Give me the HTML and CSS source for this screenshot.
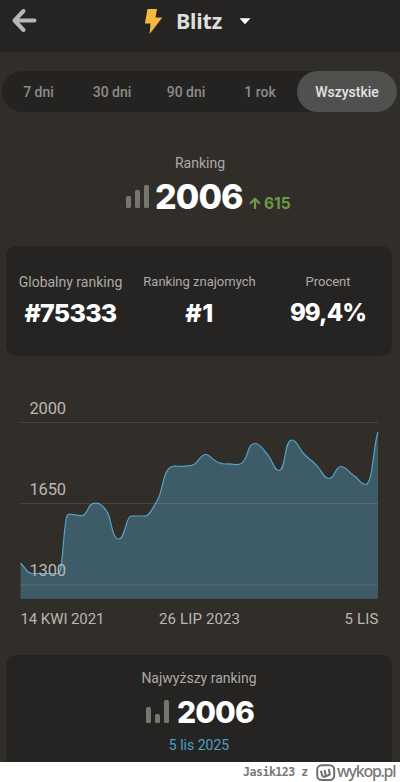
FILE: index.html
```
<!DOCTYPE html>
<html lang="pl">
<head>
<meta charset="utf-8">
<title>Blitz</title>
<link rel="stylesheet" href="styles.css">
</head>
<body>
<main class="app">
  <header class="header">
    <svg class="back" width="26" height="26" viewBox="0 0 26 26"><path d="M12.500 3 3.500 12.500 12.500 22M4 12.500H23.500"/></svg>
    <svg class="bolt" width="20" height="27" viewBox="0 0 20 27"><path d="M3.500 1H13L11.500 9.500H18.300L5.600 26 6.500 15.500H.900Z"/></svg>
    <h1 class="title">Blitz</h1>
    <svg class="caret" width="12" height="7" viewBox="0 0 12 7"><path d="M.5.300H11.500L6 6.300Z"/></svg>
  </header>
  <nav class="tabs">
    <span class="tab week">7 dni</span><span class="tab month">30 dni</span><span class="tab quarter">90 dni</span><span class="tab year">1 rok</span><span class="tab active">Wszystkie</span>
  </nav>
  <section class="rating">
    <div class="label">Ranking</div>
    <div class="rating-row">
      <svg class="bars" width="25" height="25" viewBox="0 0 25 25"><rect x="1" y="12" width="5" height="12" rx="1.500"/><rect x="10" y="6" width="5" height="18" rx="1.500"/><rect x="19" y="1" width="5" height="23" rx="1.500"/></svg>
      <span class="score">2006</span>
      <svg class="up" width="12" height="12" viewBox="0 0 12 12"><path d="M6 11V2M1.800 6 6 1.800 10.200 6"/></svg>
      <span class="gain">615</span>
    </div>
  </section>
  <section class="card stats">
    <div class="stat global"><div class="label">Globalny ranking</div><div class="value">#75333</div></div>
    <div class="stat friends"><div class="label small">Ranking znajomych</div><div class="value rank">#1</div></div>
    <div class="stat percent"><div class="label small">Procent</div><div class="value share">99,4%</div></div>
  </section>
  <svg class="chart" width="400" height="250" viewBox="0 390 400 250">
    <path class="area" d="M20.500 563C25 567 27 573.500 32 573.500H58C63 573.500 62 545 66 520C67 511 71 515 76 515C81 516 84 517 87 511C90 505 91 503 96 503C101 503 107 510 109 516C112 526 113 539 119 539C125 539 126 516 131 516H145C150 516 153 507 157 501C164 490 162 466 175 466C181 467 191 466 194 464.500C199 462 200 454.500 206 454.500C211 454.500 213 464 226 464C234 463 237 467 242 463C249 457 247 443.500 255 443.500C261 443.500 264 451 268 455C274 463 274 470.500 279 470.500C286 470.500 284 440 292 440C297 440 299 449 304 454C309 459 314 462 318 467C323 473 324 478.500 329 478.500C335 478.500 335 466.500 341 466.500C347 466.500 348 472 353 475C359 478 360 484.500 365.500 484.500C373 484.500 373 446 378 432V598.700H20.500Z"/>
    <path class="line" d="M20.500 563C25 567 27 573.500 32 573.500H58C63 573.500 62 545 66 520C67 511 71 515 76 515C81 516 84 517 87 511C90 505 91 503 96 503C101 503 107 510 109 516C112 526 113 539 119 539C125 539 126 516 131 516H145C150 516 153 507 157 501C164 490 162 466 175 466C181 467 191 466 194 464.500C199 462 200 454.500 206 454.500C211 454.500 213 464 226 464C234 463 237 467 242 463C249 457 247 443.500 255 443.500C261 443.500 264 451 268 455C274 463 274 470.500 279 470.500C286 470.500 284 440 292 440C297 440 299 449 304 454C309 459 314 462 318 467C323 473 324 478.500 329 478.500C335 478.500 335 466.500 341 466.500C347 466.500 348 472 353 475C359 478 360 484.500 365.500 484.500C373 484.500 373 446 378 432"/>
    <path class="grid" d="M20 422.500H378M20 503.500H378M20 585H378"/>
    <g class="y-labels"><text x="29.500" y="413.500" textLength="36.500">2000</text><text x="29.500" y="495" textLength="36.500">1650</text><text x="29.500" y="576" textLength="36.500">1300</text></g>
    <g class="x-labels"><text x="20.500" y="624" textLength="84">14 KWI 2021</text><text x="159" y="624" textLength="81">26 LIP 2023</text><text x="344.500" y="624" textLength="34">5 LIS</text></g>
  </svg>
  <section class="card best">
    <div class="label">Najwyższy ranking</div>
    <div class="best-row">
      <svg class="bars" width="25" height="25" viewBox="0 0 25 25"><rect x="1" y="8" width="5" height="16" rx="1.500"/><rect x="10" y="15" width="5" height="9" rx="1.500"/><rect x="19" y="1" width="5" height="23" rx="1.500"/></svg>
      <span class="best-score">2006</span>
    </div>
    <div class="date">5 lis 2025</div>
  </section>
</main>
<footer class="footer">
  <span class="author">Jasik123 z</span>
  <svg class="logo" width="20" height="18" viewBox="0 0 20 18"><rect x="1.200" y="1.200" width="17" height="14.800" rx="4.500"/><path d="M4.800 6.800 6.300 11.500Q7.300 13.500 9.700 12.300L13.800 10.500 12.800 4.800M8.600 6 9.700 11.500"/></svg>
  <span class="site">wykop.pl</span>
</footer>
</body>
</html>
```
FILE: styles.css
```
* { box-sizing: border-box; }
body { margin: 0; width: 400px; height: 782px; overflow: hidden; background: #fff; font-family: Roboto, sans-serif; }
svg { display: block; flex: none; }
.app { height: 762px; overflow: hidden; background: #312d29; }
.header { display: flex; height: 52px; background: #252422; }
.back { margin: 8px 0 0 11px; fill: none; stroke: #b8b7b5; stroke-width: 4; stroke-linecap: round; stroke-linejoin: round; }
.bolt { margin: 8px 0 0 107px; fill: #f5b93e; }
.title { margin: 8px 0 0 12px; width: 48px; font: 700 21.5px/26px "Noto Sans", sans-serif; letter-spacing: -.2px; color: #dededd; white-space: nowrap; }
.caret { margin: 18px 0 0 15px; fill: #fff; }
.tabs { display: flex; width: 395px; height: 41px; margin: 19px 0 0 2px; border-radius: 21px; background: #242321; font-weight: 500; font-size: 14px; line-height: 42px; color: #8d8c89; text-align: center; white-space: nowrap; }
.week { width: 73px; }
.month { width: 74px; }
.quarter { width: 74px; }
.year { width: 74px; }
.active { width: 100px; border-radius: 21px; background: #50504e; color: #e3e3e2; }
.rating { height: 134px; padding-top: 42px; }
.label { font-size: 14px; line-height: 18px; color: #adaaa7; text-align: center; white-space: nowrap; }
.small { font-size: 13px; }
.rating-row { display: flex; height: 40px; padding-left: 125px; }
.bars { fill: #777572; }
.rating .bars { margin-top: 12px; }
.score { width: 88px; margin-left: 5px; font: 800 34px/50px Inter, sans-serif; letter-spacing: -.9px; color: #fff; white-space: nowrap; }
.up { margin: 25px 0 0 6px; fill: none; stroke: #6d9848; stroke-width: 2.300; stroke-linecap: round; stroke-linejoin: round; }
.gain { margin-left: 3px; font: 700 15.500px/63px Inter, sans-serif; color: #6d9848; }
.card { width: 386px; margin-left: 6px; border-radius: 10px; background: #252422; }
.stats { display: flex; height: 110px; padding-top: 27px; }
.global { width: 129px; }
.friends { width: 129px; }
.percent { width: 128px; }
.value { font: 800 25px/32px Inter, sans-serif; margin-top: 6px; color: #fff; text-align: center; letter-spacing: -.7px; white-space: nowrap; }
.rank { letter-spacing: .5px; }
.share { font-size: 24px; letter-spacing: -.9px; }
.chart { margin-top: 34px; }
.area { fill: #3d5c68; }
.line { fill: none; stroke: #56a3ca; stroke-width: 1.200; }
.grid { fill: none; stroke: #ffffff1c; }
.y-labels, .x-labels { font-size: 16.500px; fill: #bab7b4; }
.x-labels { font-size: 15px; }
.best { height: 120px; margin-top: 15px; padding-top: 14px; border-radius: 10px; }
.best-row { display: flex; height: 36px; padding-left: 139px; }
.best .bars { margin-top: 12px; }
.best-score { width: 80px; margin-left: 7px; font: 800 30px/51px Inter, sans-serif; letter-spacing: -.9px; color: #fff; }
.date { margin-top: 13px; font-size: 14px; line-height: 18px; color: #4d9fc5; text-align: center; }
.footer { display: flex; height: 20px; padding-left: 243px; color: #777; white-space: nowrap; }
.author { width: 66px; font: 700 11.500px/21px "DejaVu Sans Mono", monospace; letter-spacing: -.45px; }
.logo { margin: 2px 0 0 7px; fill: none; stroke: #707070; stroke-width: 2; stroke-linejoin: round; }
.site { margin-left: 1px; font: 500 16px/18px "Noto Sans", sans-serif; letter-spacing: -1.300px; }
```
